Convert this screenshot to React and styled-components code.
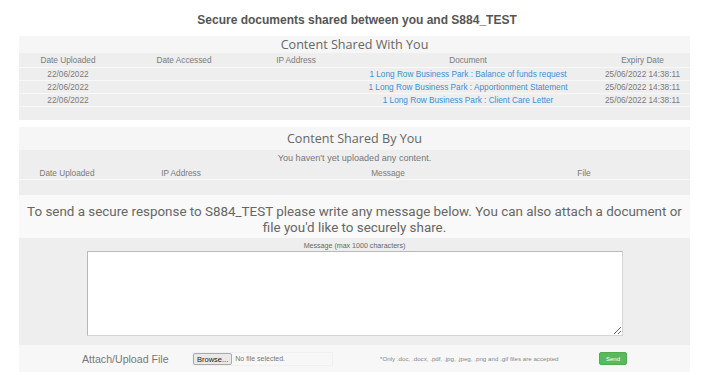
import React from 'react';
import styled, { createGlobalStyle } from 'styled-components';

const GlobalStyle = createGlobalStyle`
  body {
    margin: 0;
    background: #fff;
    font-family: "Liberation Sans", Arial, sans-serif;
    color: #777;
  }
`;

const Page = styled.div`
  width: 714px;
  padding-top: 11px;
`;

const Title = styled.h1`
  margin: 0 0 7px;
  height: 18px;
  line-height: 18px;
  text-align: center;
  font-size: 12px;
  font-weight: bold;
  color: #555;
  font-family: "Liberation Sans", Arial, sans-serif;
`;

const Panel = styled.div`
  width: 671px;
  margin-left: 19px;
`;

const Section = styled.section`
  margin-bottom: ${p => p.gap || 0}px;
`;

const SectionHead = styled.div`
  height: ${p => p.h}px;
  line-height: ${p => p.h}px;
  background: #f6f6f6;
  text-align: center;
  font-family: "Open Sans", sans-serif;
  font-size: 12.6px;
  color: #666;
`;

const Body = styled.div`
  background: #eeeeee;
  padding-bottom: ${p => p.pb}px;
`;

const Row = styled.div`
  display: grid;
  grid-template-columns: ${p => p.cols};
  height: ${p => p.h || 12}px;
  align-items: center;
  border-bottom: 1px solid #f8f8f8;
  font-size: 8.25px;
  color: #7a7a7a;
`;

const Cell = styled.div`
  text-align: center;
  white-space: nowrap;
`;

const DocLink = styled.a`
  color: #3d8fd4;
  text-decoration: none;
`;

const Notice = styled.div`
  height: 17px;
  line-height: 17px;
  text-align: center;
  font-size: 9.1px;
  color: #777;
`;

const Intro = styled.p`
  margin: 0;
  background: #f9f9f9;
  padding: 9px 8px 2px;
  text-align: center;
  font-family: Roboto, sans-serif;
  font-size: 13.4px;
  line-height: 16px;
  color: #666;
`;

const Compose = styled.div`
  background: #eeeeee;
  padding: 4px 0 9px;
  display: flex;
  flex-direction: column;
  align-items: center;
`;

const FieldLabel = styled.div`
  font-size: 7.1px;
  line-height: 9px;
  color: #666;
`;

const MessageBox = styled.textarea`
  width: 536px;
  height: 85px;
  box-sizing: border-box;
  border: 1px solid #d4d4d4;
  border-top-color: #b8b8b8;
  border-left-color: #b8b8b8;
  background: #fff;
  margin: 0;
  display: block;
`;

const Footer = styled.div`
  background: #f7f7f7;
  height: 27px;
  display: flex;
  align-items: center;
`;

const AttachLabel = styled.div`
  margin-left: 63px;
  width: 110px;
  font-size: 10.6px;
  color: #777;
`;

const FileField = styled.div`
  width: 141px;
  height: 14px;
  box-sizing: border-box;
  border: 1px solid #f0f0f0;
  display: flex;
  align-items: center;
  font-size: 7px;
  color: #777;
`;

const BrowseButton = styled.span`
  height: 12px;
  line-height: 11px;
  box-sizing: border-box;
  padding: 0 3px;
  margin-right: 3px;
  border: 1px solid #aaa;
  border-radius: 2px;
  background: #e9e9e9;
  color: #222;
  font-size: 7.5px;
`;

const Note = styled.div`
  margin-left: 47px;
  width: 219px;
  font-size: 6.2px;
  color: #888;
`;

const SendButton = styled.button`
  width: 28px;
  height: 13px;
  padding: 0;
  border: 1px solid #4cae4c;
  border-radius: 2px;
  background: #5cb85c;
  color: #fff;
  font-size: 6px;
  font-family: "Liberation Sans", Arial, sans-serif;
`;

const withYouCols = '98px 134px 90px 254px 1fr';
const byYouCols = '96px 132px 282px 110px 1fr';

const docs = [
  'Balance of funds request',
  'Apportionment Statement',
  'Client Care Letter',
];

export default function App() {
  return (
    <Page>
      <GlobalStyle />
      <Title>Secure documents shared between you and S884_TEST</Title>
      <Panel>
        <Section gap={7}>
          <SectionHead h={17}>Content Shared With You</SectionHead>
          <Body pb={13}>
            <Row cols={withYouCols} h={14}>
              <Cell>Date Uploaded</Cell>
              <Cell>Date Accessed</Cell>
              <Cell>IP Address</Cell>
              <Cell>Document</Cell>
              <Cell>Expiry Date</Cell>
            </Row>
            {docs.map(d => (
              <Row cols={withYouCols} key={d}>
                <Cell>22/06/2022</Cell>
                <Cell />
                <Cell />
                <Cell><DocLink href="#">1 Long Row Business Park : {d}</DocLink></Cell>
                <Cell>25/06/2022 14:38:11</Cell>
              </Row>
            ))}
          </Body>
        </Section>
        <Section>
          <SectionHead h={23}>Content Shared By You</SectionHead>
          <Body pb={15}>
            <Notice>You haven't yet uploaded any content.</Notice>
            <Row cols={byYouCols}>
              <Cell>Date Uploaded</Cell>
              <Cell>IP Address</Cell>
              <Cell>Message</Cell>
              <Cell>File</Cell>
              <Cell />
            </Row>
          </Body>
        </Section>
        <Intro>
          To send a secure response to S884_TEST please write any message below. You can also attach a document or file you'd like to securely share.
        </Intro>
        <Compose>
          <FieldLabel>Message (max 1000 characters)</FieldLabel>
          <MessageBox />
        </Compose>
        <Footer>
          <AttachLabel>Attach/Upload File</AttachLabel>
          <FileField>
            <BrowseButton>Browse...</BrowseButton>
            No file selected.
          </FileField>
          <Note>*Only .doc, .docx, .pdf, .jpg, .jpeg, .png and .gif files are accepted</Note>
          <SendButton>Send</SendButton>
        </Footer>
      </Panel>
    </Page>
  );
}
